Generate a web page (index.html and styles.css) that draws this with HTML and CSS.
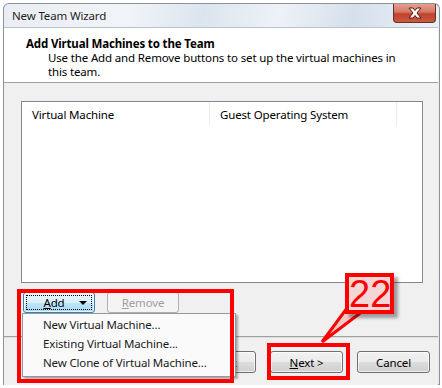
FILE: index.html
```html
<!DOCTYPE html>
<html>
<head>
<meta charset="utf-8">
<link rel="stylesheet" href="styles.css">
</head>
<body>
<div class="window">
  <div class="titlebar">
    <span class="title">New Team Wizard</span>
    <div class="close">
      <svg width="18" height="12" viewBox="0 0 18 12"><path d="M3 1 L7 1 L9 3.5 L11 1 L15 1 L11 6 L15 11 L11 11 L9 8.5 L7 11 L3 11 L7 6 Z" fill="#fff" stroke="#5a1a12" stroke-width="1"/></svg>
    </div>
  </div>
  <div class="client">
    <div class="header">
      <div class="h-title">Add Virtual Machines to the Team</div>
      <div class="h-desc">Use the Add and Remove buttons to set up the virtual machines in this team.</div>
    </div>
    <div class="body">
      <div class="listbox">
        <div class="cols">
          <div class="col c1">Virtual Machine</div>
          <div class="col c2">Guest Operating System</div>
          <div class="col c3"></div>
        </div>
      </div>
      <div class="btnrow">
        <button class="btn add"><span class="focus"><span><u>A</u>dd</span><span class="arrow"></span></span></button>
        <button class="btn disabled"><u>R</u>emove</button>
      </div>
      <div class="footer">
        <button class="btn back">&lt; <u>B</u>ack</button>
        <button class="btn next"><u>N</u>ext &gt;</button>
        <button class="btn cancel">Cancel</button>
      </div>
    </div>
  </div>
  <div class="menu">
    <div class="mi">New Virtual Machine...</div>
    <div class="mi">Existing Virtual Machine...</div>
    <div class="mi">New Clone of Virtual Machine...</div>
  </div>
  <div class="mark mark-menu"></div>
  <div class="mark mark-next"></div>
  <svg class="pointer" width="60" height="40" viewBox="0 0 60 40"><polygon points="28,2 48,2 3,36" fill="#f3c9c9" stroke="#ff0000" stroke-width="3" stroke-linejoin="miter"/></svg>
  <div class="callout">22</div>
</div>
</body>
</html>
```
FILE: styles.css
```css
html, body { margin: 0; padding: 0; background: #fff; }
body { font-family: "Noto Sans", "Open Sans", sans-serif; font-size: 11.5px; letter-spacing: -0.15px; color: #000; }
.window {
  position: relative;
  margin: 3px 0 0 3px;
  width: 435px;
  height: 380px;
  border: 1px solid #8e9399;
  border-bottom-color: #6a9fd0;
  border-radius: 6px 6px 0 0;
  background: linear-gradient(100deg, #e9eef4 0%, #f1f4f8 25%, #dbe5ef 40%, #eef2f7 55%, #d5e0ec 70%, #eaf0f6 85%, #dfe8f1 100%);
}
.titlebar { height: 23px; display: flex; align-items: center; padding-left: 8px; position: relative; }
.title { color: #1e1e1e; }
.close {
  position: absolute; right: 3px; top: 0;
  width: 41px; height: 18px;
  border: 1px solid #6b2d24; border-top: none;
  border-radius: 0 0 4px 4px;
  background: linear-gradient(#e6a08e 0%, #d47766 45%, #c0412c 55%, #c95a3f 100%);
  display: flex; align-items: center; justify-content: center;
}
.client { background: #f0f0f0; height: 357px; margin-right: 1px; border-top: 1px solid #b9c3cf; }
.header { background: #fff; height: 55px; border-bottom: 1px solid #a0a0a0; padding: 8px 0 0 22px; box-sizing: border-box; }
.h-title { font-weight: bold; line-height: 15px; }
.h-desc { padding-left: 22px; width: 352px; line-height: 14px; }
.body { padding: 18px 0 0 17px; }
.listbox { width: 400px; height: 180px; border: 1px solid #828790; background: #fff; }
.cols { display: flex; height: 24px; }
.col { line-height: 25px; padding-left: 10px; box-sizing: border-box; border-right: 1px solid #ececec; }
.c1 { width: 188px; }
.c2 { width: 187px; }
.c3 { width: 24px; border-right: none; }
.btnrow { display: flex; gap: 12px; margin-top: 9px; height: 20px; padding-left: 2px; }
.btn {
  font-family: inherit; font-size: 11.5px; letter-spacing: -0.15px; color: #000;
  width: 72px; height: 21px; padding: 0;
  border: 1px solid #707070; border-radius: 3px;
  background: linear-gradient(#f2f2f2 0%, #ebebeb 50%, #dddddd 51%, #cfcfcf 100%);
  box-shadow: inset 0 0 0 1px rgba(255,255,255,0.7);
}
.btn.add { border-color: #3c7fb1; background: linear-gradient(#eaf6fd 0%, #d9f0fc 50%, #bee6fd 51%, #a7d9f5 100%); padding: 2px; }
.focus { display: flex; align-items: center; justify-content: center; height: 100%; border: 1px dotted #000; box-sizing: border-box; gap: 14px; padding-left: 12px; }
.arrow { width: 0; height: 0; border-left: 4px solid transparent; border-right: 4px solid transparent; border-top: 4px solid #000; }
.btn.disabled { border-color: #adb2b5; background: #f4f4f4; color: #a0a0a0; box-shadow: none; }
.footer { margin-top: 25px; margin-left: -17px; border-top: 1px solid #dfdfdf; box-shadow: 0 -1px 0 #a0a0a0; padding: 13px 0 0 179px; display: flex; gap: 14px; }
.footer .btn { width: 73px; height: 22px; }
.menu {
  position: absolute; left: 18px; top: 309px; width: 214px; height: 64px;
  background: #fafafa; border: 1px solid #979797;
  box-shadow: 2px 2px 2px rgba(0,0,0,0.3);
  padding-top: 1px; box-sizing: border-box;
}
.mi { padding-left: 20px; height: 19px; line-height: 19px; color: #1a1a1a; }
.mark { position: absolute; border: 4px solid #ff0000; box-sizing: border-box; }
.mark-menu { left: 13px; top: 285px; width: 217px; height: 94px; }
.mark-next { left: 263px; top: 339px; width: 83px; height: 37px; }
.pointer { position: absolute; left: 315px; top: 302px; }
.callout {
  position: absolute; left: 341px; top: 269px; width: 49px; height: 41px;
  border: 4px solid #ff0000; box-sizing: border-box; background: #f5d6d6;
  color: #ff0000; font-family: "Liberation Sans", sans-serif; font-size: 38px; letter-spacing: 0; line-height: 34px; text-align: center;
  box-shadow: 4px 4px 3px rgba(0,0,0,0.35);
}
```
